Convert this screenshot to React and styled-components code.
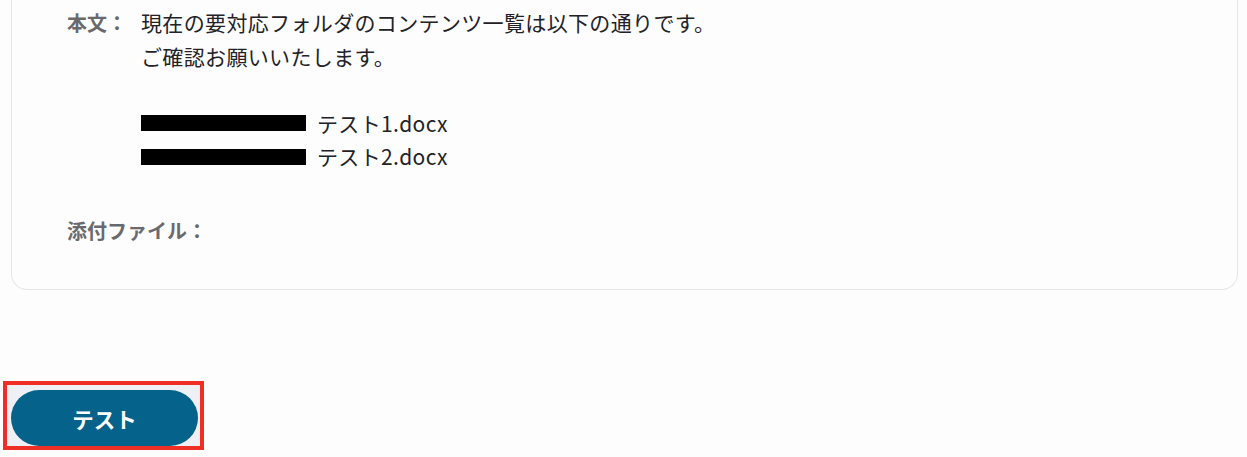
import React from "react";
import styled, { createGlobalStyle } from "styled-components";

const GlobalStyle = createGlobalStyle`
  html, body {
    margin: 0;
    padding: 0;
    background: #fefdfe;
  }
  body {
    font-family: "Noto Sans CJK JP", "Noto Sans", sans-serif;
  }
`;

const Page = styled.div`
  display: flex;
  flex-direction: column;
`;

const Card = styled.div`
  margin: 0 9px 0 11px;
  background: #fefdfe;
  border: 1px solid #e7e5ea;
  border-top: none;
  border-radius: 0 0 16px 16px;
  padding: 6px 40px 42px 55px;
  display: flex;
  flex-direction: column;
  gap: 40px;
`;

const Field = styled.div`
  display: grid;
  grid-template-columns: 74px 1fr;
  font-size: 21px;
  line-height: 33.5px;
`;

const Label = styled.div`
  color: #6a6a6e;
  font-weight: 600;
  font-size: 20px;
  white-space: nowrap;
`;

const Value = styled.div`
  color: #222226;
  letter-spacing: 0.35px;
`;

const Line = styled.div`
  display: flex;
  align-items: center;
  min-height: 33.5px;
`;

const Redacted = styled.span`
  display: inline-block;
  width: 165px;
  height: 16px;
  background: #000;
  margin-right: 11px;
`;

const ButtonArea = styled.div`
  margin-top: 91px;
  padding-left: 3px;
`;

const Highlight = styled.div`
  display: inline-block;
  border: 4px solid #ef2e26;
  background: #eef0f5;
  padding: 5px 2px 0 4px;
`;

const TestButton = styled.button`
  width: 187px;
  height: 56px;
  border: none;
  border-radius: 28px;
  background: #05628a;
  color: #fff;
  font-family: "Noto Sans CJK JP", sans-serif;
  font-size: 21.5px;
  font-weight: 700;
  display: flex;
  align-items: center;
  justify-content: center;
  cursor: pointer;
`;

export default function App() {
  return (
    <Page>
      <GlobalStyle />
      <Card>
        <Field>
          <Label>本文：</Label>
          <Value>
            <Line>現在の要対応フォルダのコンテンツ一覧は以下の通りです。</Line>
            <Line>ご確認お願いいたします。</Line>
            <Line />
            <Line>
              <Redacted />
              テスト1.docx
            </Line>
            <Line>
              <Redacted />
              テスト2.docx
            </Line>
          </Value>
        </Field>
        <Field>
          <Label>添付ファイル：</Label>
          <Value />
        </Field>
      </Card>
      <ButtonArea>
        <Highlight>
          <TestButton>テスト</TestButton>
        </Highlight>
      </ButtonArea>
    </Page>
  );
}
